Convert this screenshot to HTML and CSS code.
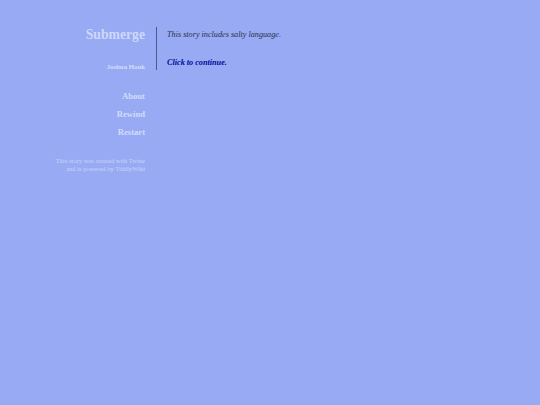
FILE: index.html
```html
<!DOCTYPE html>
<html>
<head>
<meta charset="utf-8">
<link rel="stylesheet" href="styles.css">
</head>
<body>
<div class="page">
  <div class="sidebar">
    <h1 class="title">Submerge</h1>
    <div class="author">Joshua Houk</div>
    <ul class="menu">
      <li>About</li>
      <li>Rewind</li>
      <li>Restart</li>
    </ul>
    <div class="credits">This story was created with Twine<br>and is powered by TiddlyWiki</div>
  </div>
  <div class="passage">
    <p class="line">This story includes salty language.</p>
    <p class="link">Click to continue.</p>
  </div>
</div>
</body>
</html>
```

FILE: styles.css
```css
html, body {
  margin: 0;
  padding: 0;
  background: #97aaf3;
  height: 100%;
}
body {
  font-family: "Liberation Serif", "Times New Roman", serif;
}
.page {
  display: flex;
  align-items: flex-start;
  padding-top: 27px;
}
.sidebar {
  width: 145px;
  text-align: right;
  color: rgba(255, 255, 255, 0.6);
}
.title {
  margin: 0;
  font-size: 13.7px;
  font-weight: bold;
  line-height: 16px;
  color: rgba(255, 255, 255, 0.55);
}
.author {
  margin-top: 20px;
  font-size: 6.8px;
  font-weight: bold;
  line-height: 8px;
}
.menu {
  list-style: none;
  margin: 20px 0 0;
  padding: 0;
  font-size: 8.6px;
  font-weight: bold;
  line-height: 10px;
}
.menu li {
  margin-bottom: 8px;
}
.credits {
  margin-top: 20px;
  font-size: 6.5px;
  line-height: 8px;
  color: rgba(255, 255, 255, 0.5);
}
.passage {
  margin-left: 11px;
  border-left: 1px solid #4a5a8f;
  padding-left: 10px;
  padding-top: 1px;
  min-height: 42px;
  font-size: 8.2px;
  font-style: italic;
}
.line {
  margin: 2px 0 0;
  color: #2a2f48;
  line-height: 10px;
}
.link {
  margin: 18px 0 0;
  font-weight: bold;
  color: #000a99;
  line-height: 10px;
}
```
